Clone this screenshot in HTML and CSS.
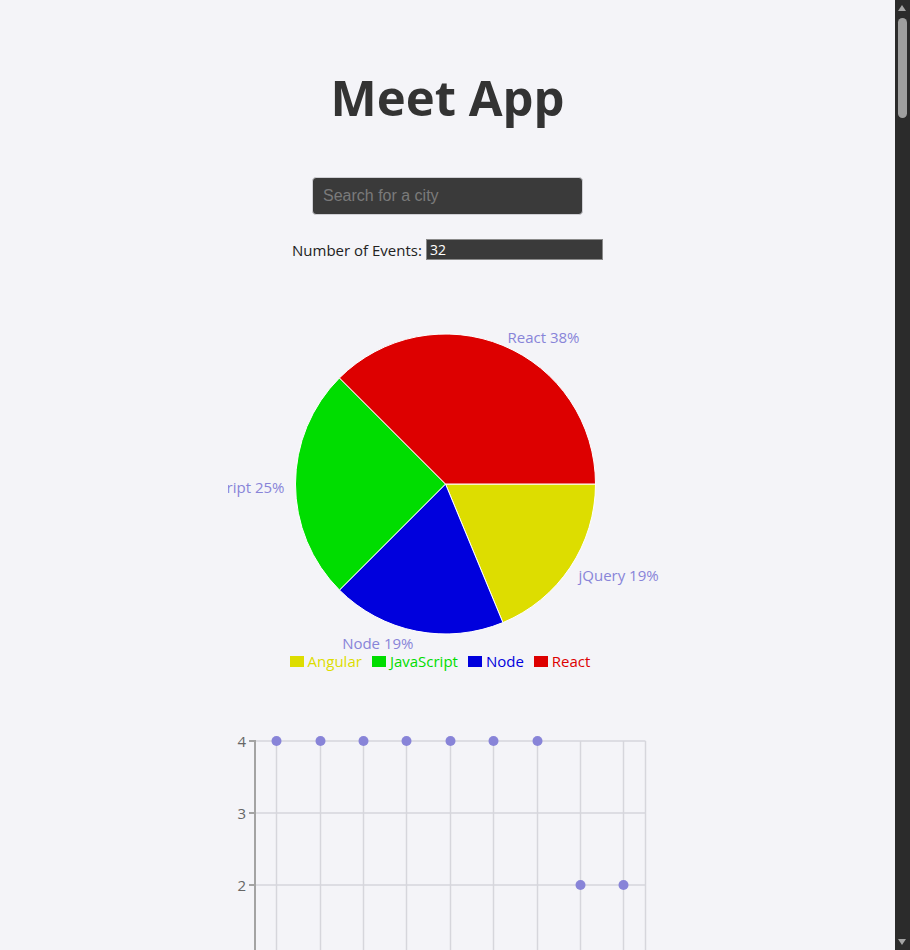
FILE: index.html
```html
<!DOCTYPE html>
<html lang="en">
<head>
<meta charset="utf-8">
<title>Meet App</title>
<link rel="stylesheet" href="styles.css">
</head>
<body>
<div class="app">
  <h1 class="title">Meet App</h1>

  <div class="city-search">
    <input class="city" type="text" placeholder="Search for a city">
  </div>

  <div class="number-of-events">
    <label for="event-count">Number of Events:</label>
    <input id="event-count" class="event-count" type="text" value="32">
  </div>

  <div class="charts">
    <svg class="pie" width="440" height="352" viewBox="0 0 440 352">
      <g class="slices" stroke="#fff" stroke-width="1">
        <path fill="#dddd00" d="M217.5,184 L367.5,184 A150,150 0 0 1 274.9,322.58 Z"/>
        <path fill="#0000dd" d="M217.5,184 L274.9,322.58 A150,150 0 0 1 111.43,290.07 Z"/>
        <path fill="#00dd00" d="M217.5,184 L111.43,290.07 A150,150 0 0 1 111.43,77.93 Z"/>
        <path fill="#dd0000" d="M217.5,184 L111.43,77.93 A150,150 0 0 1 367.5,184 Z"/>
      </g>
      <g class="pie-labels">
        <text x="279.5" y="37" text-anchor="start">React 38%</text>
        <text x="56.5" y="187" text-anchor="end">JavaScript 25%</text>
        <text x="350.5" y="275" text-anchor="start">jQuery 19%</text>
        <text x="185.5" y="343" text-anchor="end">Node 19%</text>
      </g>
    </svg>

    <ul class="legend">
      <li class="legend-item angular"><span class="swatch"></span>Angular</li>
      <li class="legend-item javascript"><span class="swatch"></span>JavaScript</li>
      <li class="legend-item node"><span class="swatch"></span>Node</li>
      <li class="legend-item react"><span class="swatch"></span>React</li>
    </ul>

    <svg class="scatter" width="440" height="340" viewBox="0 0 440 340">
      <g class="grid" stroke="#d6d6dc" stroke-width="1.5">
        <line x1="27.5" y1="21" x2="417.5" y2="21"/>
        <line x1="27.5" y1="93" x2="417.5" y2="93"/>
        <line x1="27.5" y1="165" x2="417.5" y2="165"/>
        <line x1="27.5" y1="237" x2="417.5" y2="237"/>
        <line x1="48.5" y1="21" x2="48.5" y2="309"/>
        <line x1="92.5" y1="21" x2="92.5" y2="309"/>
        <line x1="135.5" y1="21" x2="135.5" y2="309"/>
        <line x1="178.5" y1="21" x2="178.5" y2="309"/>
        <line x1="222.5" y1="21" x2="222.5" y2="309"/>
        <line x1="265.5" y1="21" x2="265.5" y2="309"/>
        <line x1="309.5" y1="21" x2="309.5" y2="309"/>
        <line x1="352.5" y1="21" x2="352.5" y2="309"/>
        <line x1="395.5" y1="21" x2="395.5" y2="309"/>
        <line x1="417.5" y1="21" x2="417.5" y2="309"/>
      </g>
      <g class="y-axis" stroke="#a3a3a3" stroke-width="2">
        <line x1="27" y1="20" x2="27" y2="309"/>
        <line x1="21" y1="21" x2="27" y2="21"/>
        <line x1="21" y1="93" x2="27" y2="93"/>
        <line x1="21" y1="165" x2="27" y2="165"/>
        <line x1="21" y1="237" x2="27" y2="237"/>
      </g>
      <g class="ticks" text-anchor="end">
        <text x="18" y="21">4</text>
        <text x="18" y="93">3</text>
        <text x="18" y="165">2</text>
        <text x="18" y="237">1</text>
      </g>
      <g class="dots" fill="#8884d8">
        <circle cx="48.5" cy="21" r="5"/>
        <circle cx="92.5" cy="21" r="5"/>
        <circle cx="135.5" cy="21" r="5"/>
        <circle cx="178.5" cy="21" r="5"/>
        <circle cx="222.5" cy="21" r="5"/>
        <circle cx="265.5" cy="21" r="5"/>
        <circle cx="309.5" cy="21" r="5"/>
        <circle cx="352.5" cy="165" r="5"/>
        <circle cx="395.5" cy="165" r="5"/>
      </g>
    </svg>
  </div>
</div>

<div class="scrollbar" aria-hidden="true">
  <span class="arrow up"></span>
  <span class="thumb"></span>
  <span class="arrow down"></span>
</div>
</body>
</html>
```

FILE: styles.css
```css
html {
  overflow: hidden;
  background: #f4f4f8;
}

body {
  margin: 0;
  background: #f4f4f8;
  color: #333;
  font-family: "Open Sans", "Noto Sans", sans-serif;
}

.app {
  width: calc(100% - 15px);
  display: flex;
  flex-direction: column;
  align-items: center;
}

.title {
  margin: 61px 0 0;
  font-size: 49px;
  line-height: 72px;
  font-weight: 700;
  color: #333;
}

.city-search {
  margin-top: 44px;
}

.city {
  box-sizing: border-box;
  width: 271px;
  height: 38px;
  padding: 0 10px;
  border: 1px solid #cfcfd4;
  border-radius: 4px;
  background: #3a3a3a;
  color: #fff;
  font-family: "Liberation Sans", Arial, sans-serif;
  font-size: 16px;
  outline: none;
}

.city::placeholder {
  color: #7a7a7a;
}

.number-of-events {
  margin-top: 24px;
  display: flex;
  align-items: center;
  gap: 4px;
  font-size: 15px;
  color: #222;
}

.event-count {
  box-sizing: border-box;
  width: 177px;
  height: 21px;
  padding: 0 3px;
  border: 1px solid #8a8a8a;
  background: #3a3a3a;
  color: #fff;
  font-family: "Open Sans", sans-serif;
  font-size: 14px;
  outline: none;
}

.charts {
  display: flex;
  flex-direction: column;
  align-items: center;
  margin-top: 40px;
}

.pie {
  display: block;
  overflow: hidden;
}

.pie-labels text {
  fill: #8884d8;
  font-size: 15px;
  dominant-baseline: central;
}

.legend {
  list-style: none;
  margin: 0 15px 0 0;
  padding: 0;
  display: flex;
  gap: 10px;
  font-size: 15px;
  line-height: 18px;
}

.legend-item {
  display: flex;
  align-items: center;
  gap: 4px;
}

.swatch {
  display: block;
  width: 14px;
  height: 11px;
}

.angular { color: #dddd00; }
.angular .swatch { background: #dddd00; }
.javascript { color: #00dd00; }
.javascript .swatch { background: #00dd00; }
.node { color: #0000dd; }
.node .swatch { background: #0000dd; }
.react { color: #dd0000; }
.react .swatch { background: #dd0000; }

.scatter {
  display: block;
  margin-top: 50px;
}

.ticks text {
  fill: #666;
  font-size: 15px;
  dominant-baseline: central;
}

/* window scrollbar */
.scrollbar {
  position: fixed;
  top: 0;
  right: 0;
  width: 15px;
  height: 100%;
  background: #2b2b2b;
}

.thumb {
  position: absolute;
  left: 3px;
  top: 18px;
  width: 9px;
  height: 100px;
  border-radius: 5px;
  background: #9f9f9f;
}

.arrow {
  position: absolute;
  left: 3px;
  width: 0;
  height: 0;
  border-left: 4.5px solid transparent;
  border-right: 4.5px solid transparent;
}

.arrow.up {
  top: 5px;
  border-bottom: 6px solid #a3a3a3;
}

.arrow.down {
  bottom: 5px;
  border-top: 6px solid #a3a3a3;
}
```
